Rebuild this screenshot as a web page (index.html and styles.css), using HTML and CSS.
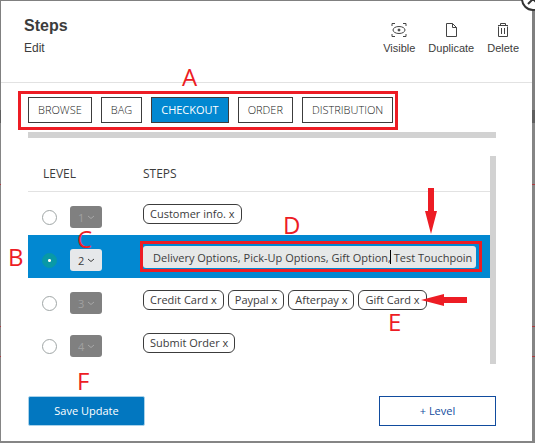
FILE: index.html
```html
<!DOCTYPE html>
<html lang="en">
<head>
<meta charset="utf-8">
<title>Steps</title>
<link rel="stylesheet" href="styles.css">
</head>
<body>
<main class="modal">
  <header class="header">
    <div>
      <h1 class="title">Steps</h1>
      <p class="subtitle">Edit</p>
    </div>
    <div class="actions">
      <button class="action" type="button">
        <svg width="16" height="16" viewBox="0 0 16 16" fill="none" stroke="#444"><path d="M1 4V1.500H4M12 1.500h3V4M15 12v2.500h-3M4 14.500H1V12"/><ellipse cx="8" cy="8" rx="6" ry="3.500"/><circle cx="8" cy="8" r="1" fill="#444"/></svg>
        Visible
      </button>
      <button class="action" type="button">
        <svg width="16" height="16" viewBox="0 0 16 16" fill="none" stroke="#444"><path d="M3.500 1.500h6l4 4v9h-10zM9.500 1.500v4h4"/></svg>
        Duplicate
      </button>
      <button class="action" type="button">
        <svg width="16" height="16" viewBox="0 0 16 16" fill="none" stroke="#444"><path d="M3.500 4.500v10h9v-10M3 3.500h10M5.500 3V1.500h5V3M6.500 6v6M9.500 6v6"/></svg>
        Delete
      </button>
    </div>
  </header>

  <section class="content">
    <nav class="tabs">
      <button class="tab" type="button">BROWSE</button>
      <button class="tab" type="button">BAG</button>
      <button class="tab active" type="button">CHECKOUT</button>
      <button class="tab" type="button">ORDER</button>
      <button class="tab" type="button">DISTRIBUTION</button>
      <span class="note note-a">A</span>
    </nav>
    <div class="track"></div>

    <div class="panel">
      <table class="levels">
        <thead>
          <tr><th class="level-col">LEVEL</th><th>STEPS</th></tr>
        </thead>
        <tbody>
          <tr>
            <td><div class="level">
              <input class="radio" type="radio" name="level" aria-label="Level 1">
              <span class="picker"><select aria-label="Order of level 1" disabled><option>1</option></select><svg width="8" height="5" viewBox="0 0 8 5"><path d="M1 1l3 2.500L7 1"/></svg></span>
            </div></td>
            <td><div class="chips"><button class="chip" type="button">Customer info. x</button></div></td>
          </tr>
          <tr class="selected">
            <td><div class="level">
              <input class="radio" type="radio" name="level" aria-label="Level 2" checked>
              <span class="picker"><select aria-label="Order of level 2"><option>2</option></select><svg width="8" height="5" viewBox="0 0 8 5"><path d="M1 1l3 2.500L7 1"/></svg></span>
              <span class="note note-b">B</span>
              <span class="note note-c">C</span>
            </div></td>
            <td><div class="editor">
              <input class="steps-input" type="text" aria-label="Steps of level 2" value="Delivery Options, Pick-Up Options, Gift Option, Test Touchpoint">
              <span class="caret"></span>
              <span class="note note-d">D</span>
              <svg class="arrow-down" width="14" height="46" viewBox="0 0 14 46"><path d="M4 0h6v23h3L7 46 1 23h3z"/></svg>
            </div></td>
          </tr>
          <tr>
            <td><div class="level">
              <input class="radio" type="radio" name="level" aria-label="Level 3">
              <span class="picker"><select aria-label="Order of level 3" disabled><option>3</option></select><svg width="8" height="5" viewBox="0 0 8 5"><path d="M1 1l3 2.500L7 1"/></svg></span>
            </div></td>
            <td><div class="chips">
              <button class="chip" type="button">Credit Card x</button>
              <button class="chip" type="button">Paypal x</button>
              <button class="chip" type="button">Afterpay x</button>
              <button class="chip" type="button">Gift Card x</button>
              <span class="note note-e">E</span>
              <svg class="arrow-left" width="46" height="14" viewBox="0 0 46 14"><path d="M46 4v6H23v3L0 7l23-6v3z"/></svg>
            </div></td>
          </tr>
          <tr>
            <td><div class="level">
              <input class="radio" type="radio" name="level" aria-label="Level 4">
              <span class="picker"><select aria-label="Order of level 4" disabled><option>4</option></select><svg width="8" height="5" viewBox="0 0 8 5"><path d="M1 1l3 2.500L7 1"/></svg></span>
            </div></td>
            <td><div class="chips"><button class="chip" type="button">Submit Order x</button></div></td>
          </tr>
        </tbody>
      </table>
      <div class="side-track"></div>
    </div>

    <footer class="footer">
      <button class="button primary" type="button">Save Update</button>
      <button class="button" type="button">+ Level</button>
      <span class="note note-f">F</span>
    </footer>
  </section>
</main>
<button class="close" type="button" aria-label="Close"><svg width="14" height="12" viewBox="0 0 14 12"><circle cx="12" cy="-1" r="11" fill="#fff" stroke="#333" stroke-width="2"/><path d="M7-6l10 10M17-6L7 4" stroke="#333" stroke-width="2"/></svg></button>
</body>
</html>
```
FILE: styles.css
```css
* { box-sizing: border-box; }

body {
  margin: 0;
  padding: 1px 3px 2px 1px;
  min-height: 100vh;
  position: relative;
  color: #3c3c3c;
  font-family: "Open Sans", "Noto Sans", sans-serif;
  font-size: 11px;
  background: linear-gradient(#808080 0 110px, #5f5f5f 110px 123px, #858585 123px 184px, #b03a40 184px 185px, #858585 185px 326px, #b03a40 326px 327px, #858585 327px 356px, #b03a40 356px 357px, #858585 357px);
}

button, input, select {
  margin: 0;
  font: inherit;
  color: inherit;
}

.modal { background: #fff; }

.header {
  display: flex;
  justify-content: space-between;
  height: 82px;
  padding: 14px 13px 0 23px;
  border-bottom: 1px solid #e2e2e2;
  font-family: "Liberation Sans", Arial, sans-serif;
}

.title {
  margin: 0;
  font-size: 16px;
  line-height: 22px;
}

.subtitle {
  margin: 0;
  font-size: 12px;
  line-height: 22px;
}

.actions {
  display: flex;
  align-items: flex-start;
  gap: 13px;
  padding-top: 7px;
}

.action {
  display: flex;
  flex-direction: column;
  align-items: center;
  gap: 3px;
  padding: 0;
  border: 0;
  background: none;
  line-height: 14px;
}

.content { padding: 14px 36px 15px 27px; }

.tabs {
  position: relative;
  display: flex;
  gap: 9px;
  width: max-content;
}

.tabs::before {
  content: "";
  position: absolute;
  inset: -6px -5px -7px -10px;
  border: 3px solid #ed1c24;
  pointer-events: none;
}

.tab {
  height: 26px;
  padding: 0 9px;
  border: 1px solid #3c3c3c;
  background: #fff;
  color: #222;
  font-weight: 300;
  line-height: 24px;
}

.tab.active {
  background: #0288d1;
  color: #fff;
  font-weight: 400;
}

.track {
  height: 6px;
  margin-top: 9px;
  background: #d2d2d2;
}

.panel {
  display: flex;
  margin-top: 18px;
}

.side-track {
  width: 6px;
  background: #d2d2d2;
}

.levels {
  flex: 1;
  border-collapse: separate;
  border-spacing: 0;
  table-layout: fixed;
}

.levels th {
  height: 36px;
  padding: 0;
  border-bottom: 1px solid #e2e2e2;
  font-size: 12px;
  font-weight: 400;
  text-align: left;
}

.levels .level-col {
  width: 115px;
  padding-left: 15px;
}

.levels td {
  height: 43px;
  padding: 0;
  vertical-align: top;
}

.selected { background: #0288d1; }

.level {
  position: relative;
  display: flex;
  align-items: center;
  gap: 13px;
  padding: 14px 0 0 14px;
}

.radio {
  appearance: none;
  width: 15px;
  height: 15px;
  border: 1px solid #a0a6a6;
  border-radius: 50%;
  background: #fff;
}

.radio:checked {
  border-color: #0999a6;
  background: radial-gradient(circle, #fff 0 1px, #0999a6 2px);
}

.picker {
  position: relative;
  display: flex;
  width: 32px;
  height: 22px;
}

.picker select {
  appearance: none;
  width: 100%;
  padding: 0 8px;
  border: 0;
  border-radius: 3px;
  background: #e6e8ea;
  opacity: 1;
}

.picker select:disabled {
  background: #808080;
  color: #a0a0a0;
}

.picker svg {
  position: absolute;
  top: 9px;
  right: 7px;
  fill: none;
  stroke: #3c3c3c;
  pointer-events: none;
}

.picker select:disabled + svg { stroke: #a8a8a8; }

.chips {
  position: relative;
  display: flex;
  gap: 4px;
  padding-top: 12px;
}

.chip {
  height: 20px;
  padding: 0 6px;
  border: 1px solid #3c3c3c;
  border-radius: 6px;
  background: #fff;
  line-height: 18px;
  white-space: nowrap;
}

.editor {
  position: relative;
  padding: 11px 14px 0 0;
}

.editor::before {
  content: "";
  position: absolute;
  inset: 6px 8px -4px -3px;
  border: 3px solid #ed1c24;
  pointer-events: none;
}

.steps-input {
  display: block;
  width: 100%;
  height: 22px;
  padding: 0 4px 0 10px;
  border: 0;
  border-radius: 3px;
  background: #e6e8e8;
}

.caret {
  position: absolute;
  top: 15px;
  left: 247px;
  width: 1px;
  height: 14px;
  background: #000;
}

.footer {
  position: relative;
  display: flex;
  justify-content: space-between;
  margin-top: 32px;
}

.button {
  width: 117px;
  height: 30px;
  padding: 0;
  border: 1px solid #114c9e;
  background: #fff;
  color: #114c9e;
  line-height: 28px;
}

.button.primary {
  border-color: #a9d2ea;
  border-radius: 2px;
  background: #0277c0;
  color: #fff;
}

/* Callout letters and arrows over the controls */
.note {
  position: absolute;
  color: #ed1c24;
  font-size: 24px;
  line-height: 24px;
  pointer-events: none;
}

.note-a { left: 154px; top: -32px; }
.note-b { left: -20px; top: 10px; }
.note-c { left: 49px; top: -8px; }
.note-d { left: 140px; top: -22px; }
.note-e { left: 245px; top: 32px; }
.note-f { left: 49px; top: -27px; }

.arrow-down, .arrow-left {
  position: absolute;
  fill: #ed1c24;
}

.arrow-down { left: 281px; top: -47px; }
.arrow-left { left: 278px; top: 15px; }

.close {
  position: absolute;
  top: 0;
  right: 0;
  padding: 0;
  border: 0;
  background: none;
}

.close svg { display: block; }
```
